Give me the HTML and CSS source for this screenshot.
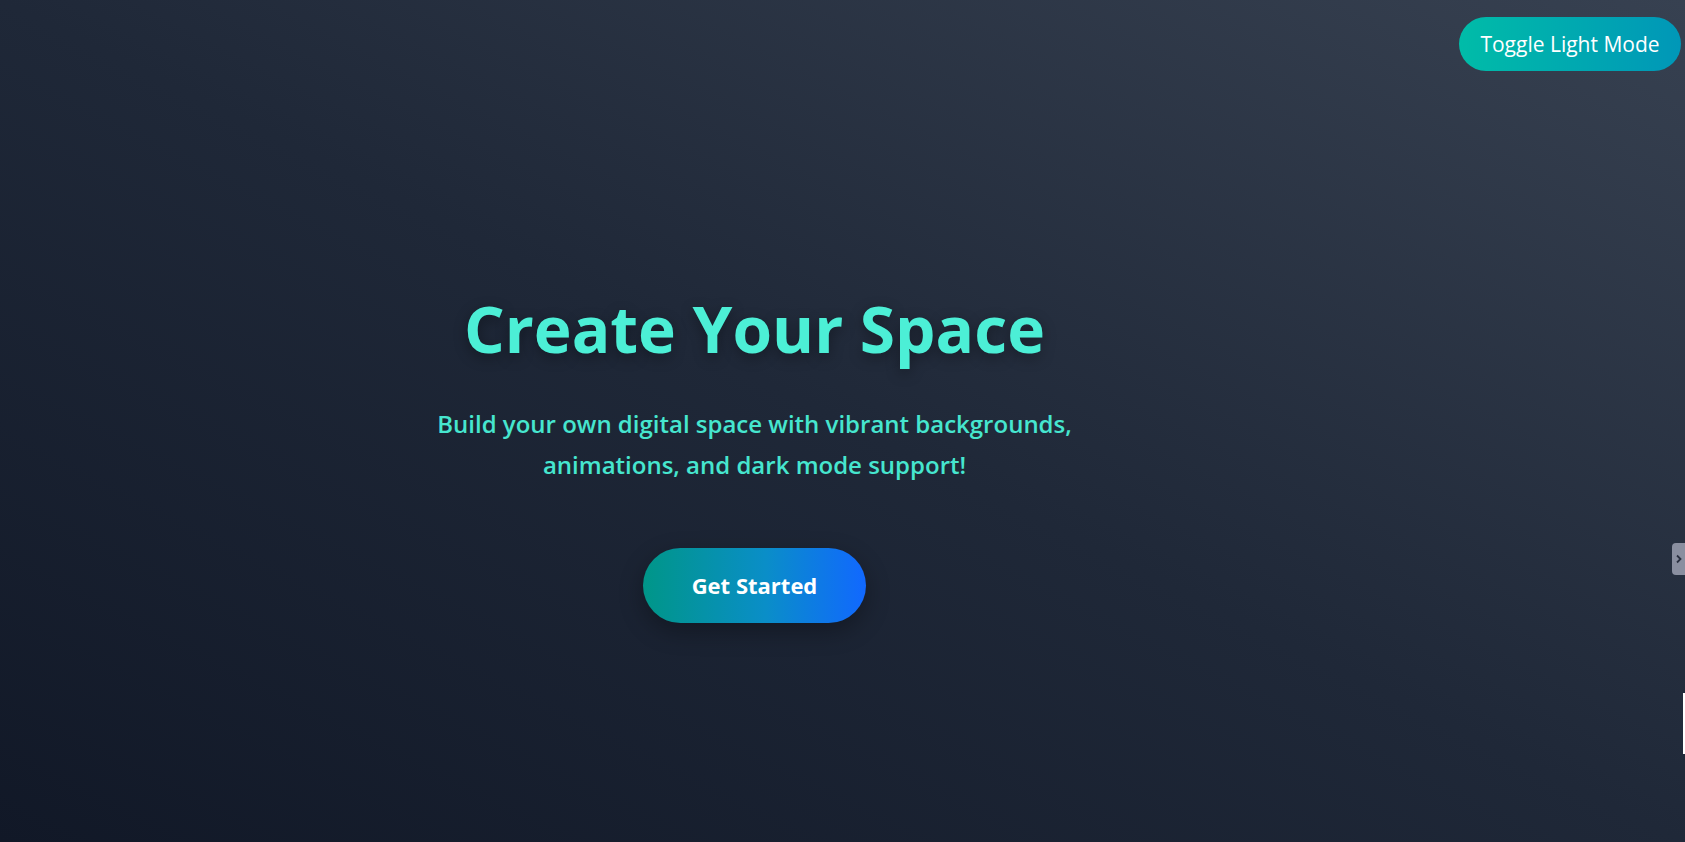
FILE: index.html
```html
<!DOCTYPE html>
<html lang="en">
<head>
<meta charset="UTF-8">
<title>Create Your Space</title>
<link rel="stylesheet" href="styles.css">
</head>
<body>
<main class="hero">
  <h1 class="hero-title">Create Your Space</h1>
  <p class="hero-text">Build your own digital space with vibrant backgrounds,<br>animations, and dark mode support!</p>
  <button class="cta">Get Started</button>
</main>
<button class="theme-toggle">Toggle Light Mode</button>
<div class="side-tab"><svg width="8" height="10" viewBox="0 0 8 10"><path d="M2 1.5 L5.5 5 L2 8.5" fill="none" stroke="#2a3040" stroke-width="1.8"/></svg></div>
<div class="edge-bar"></div>
</body>
</html>
```
FILE: styles.css
```css
html, body {
  margin: 0;
  height: 100%;
}
body {
  background: linear-gradient(to top right, #111827 0%, #1f2838 50%, #374151 100%);
  font-family: "Open Sans", "Noto Sans", sans-serif;
  overflow: hidden;
}
.hero {
  box-sizing: border-box;
  height: 100vh;
  display: flex;
  flex-direction: column;
  align-items: center;
  padding: 291px 176px 0 0;
}
.hero-title {
  margin: 0;
  font-size: 64px;
  line-height: 1.2;
  font-weight: 700;
  color: #4cefd6;
  text-shadow: 0 4px 14px rgba(0, 0, 0, 0.35);
}
.hero-text {
  margin: 35px 0 0;
  font-size: 24px;
  line-height: 41px;
  font-weight: 600;
  color: #46e6cf;
  text-align: center;
}
.cta {
  margin-top: 63px;
  height: 75px;
  padding: 0 49px;
  border: none;
  border-radius: 38px;
  background: linear-gradient(90deg, #009688 0%, #0a8ec8 55%, #1168ff 100%);
  color: #ffffff;
  font-family: inherit;
  font-size: 22px;
  font-weight: 700;
  box-shadow: 0 8px 24px rgba(0, 0, 0, 0.3);
}
.theme-toggle {
  position: fixed;
  top: 17px;
  right: 4px;
  width: 222px;
  height: 54px;
  border: none;
  border-radius: 27px;
  background: linear-gradient(90deg, #00bca8 0%, #0097b8 100%);
  color: #ffffff;
  font-family: inherit;
  font-size: 21px;
  font-weight: 400;
}
.side-tab {
  position: fixed;
  top: 543px;
  right: 0;
  width: 13px;
  height: 32px;
  background: #8a8fa0;
  border-radius: 4px 0 0 4px;
  display: flex;
  align-items: center;
  justify-content: center;
}
.edge-bar {
  position: fixed;
  top: 693px;
  right: 0;
  width: 2px;
  height: 61px;
  background: #ffffff;
}
```
